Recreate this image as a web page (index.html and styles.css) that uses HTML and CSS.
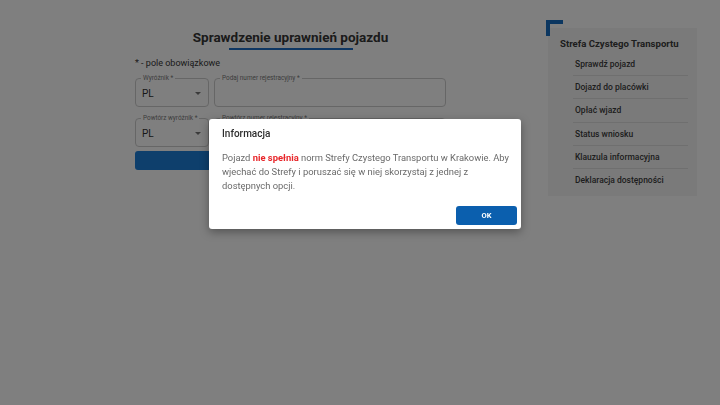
FILE: index.html
```html
<!DOCTYPE html>
<html lang="pl">
<head>
<meta charset="utf-8">
<title>Sprawdzenie uprawnień pojazdu</title>
<link rel="stylesheet" href="styles.css">
</head>
<body>
<div class="wrap">
  <main class="main">
    <h1 class="title">Sprawdzenie uprawnień pojazdu</h1>
    <div class="underline"></div>
    <p class="req">* - pole obowiązkowe</p>
    <div class="row">
      <div class="field field-sm">
        <span class="flabel">Wyróżnik *</span>
        <span class="fval">PL</span>
        <span class="arrow"></span>
      </div>
      <div class="field field-lg">
        <span class="flabel">Podaj numer rejestracyjny *</span>
      </div>
    </div>
    <div class="row row2">
      <div class="field field-sm">
        <span class="flabel">Powtórz wyróżnik *</span>
        <span class="fval">PL</span>
        <span class="arrow"></span>
      </div>
      <div class="field field-lg">
        <span class="flabel">Powtórz numer rejestracyjny *</span>
      </div>
    </div>
    <div class="btn-main"></div>
  </main>
  <aside class="side">
    <div class="corner"></div>
    <div class="side-title">Strefa Czystego Transportu</div>
    <ul class="menu">
      <li>Sprawdź pojazd</li>
      <li>Dojazd do placówki</li>
      <li>Opłać wjazd</li>
      <li>Status wniosku</li>
      <li>Klauzula informacyjna</li>
      <li>Deklaracja dostępności</li>
    </ul>
  </aside>
</div>
<div class="overlay"></div>
<div class="modal">
  <div class="modal-title">Informacja</div>
  <p class="modal-body">Pojazd <b class="red">nie spełnia</b> norm Strefy Czystego Transportu w Krakowie. Aby wjechać do Strefy i poruszać się w niej skorzystaj z jednej z dostępnych opcji.</p>
  <div class="modal-actions"><button class="ok">OK</button></div>
</div>
</body>
</html>
```
FILE: styles.css
```css
* { box-sizing: border-box; }
html, body { margin: 0; padding: 0; }
body {
  width: 720px;
  height: 405px;
  overflow: hidden;
  background: #fff;
  font-family: Roboto, "Liberation Sans", sans-serif;
  color: #363636;
}
.wrap {
  display: flex;
  padding: 20px 0 0 135px;
}
.main {
  width: 311px;
  display: flex;
  flex-direction: column;
}
.title {
  margin: 8px 0 0;
  font-size: 13.5px;
  line-height: 18px;
  font-weight: 700;
  text-align: center;
  color: #363636;
}
.underline {
  width: 124px;
  height: 2px;
  margin: 2px auto 0;
  background: #1c6cc4;
}
.req {
  margin: 7px 0 0;
  font-size: 9px;
  line-height: 12px;
  color: #363636;
}
.row {
  display: flex;
  gap: 5px;
  margin-top: 9px;
}
.row2 { margin-top: 11px; }
.field {
  position: relative;
  height: 29px;
  border: 1px solid #cdcdcd;
  border-radius: 4px;
  display: flex;
  align-items: center;
  padding-left: 6px;
}
.field-sm { width: 74px; }
.field-lg { flex: 1; }
.flabel {
  position: absolute;
  top: -5px;
  left: 5px;
  font-size: 6.4px;
  line-height: 8px;
  padding: 0 2px;
  background: #fff;
  color: #7a7a7a;
}
.fval {
  font-size: 10px;
  color: #303030;
  margin-top: 2px;
}
.arrow {
  position: absolute;
  right: 7px;
  top: 13px;
  width: 0;
  height: 0;
  border-left: 3px solid transparent;
  border-right: 3px solid transparent;
  border-top: 3px solid #777;
}
.btn-main {
  margin-top: 4px;
  height: 19px;
  border-radius: 3px;
  background: #1c7ed8;
}
.side {
  position: relative;
  width: 149px;
  height: 168px;
  margin: 8px 0 0 102px;
  background: #f4f4f4;
  padding: 10px 9px 0 12px;
}
.corner {
  position: absolute;
  top: -8px;
  left: -2px;
  width: 17px;
  height: 16px;
  border-top: 4px solid #166cc0;
  border-left: 4px solid #166cc0;
}
.side-title {
  font-size: 9.6px;
  line-height: 12px;
  font-weight: 700;
  color: #3c3c3c;
}
.menu {
  list-style: none;
  margin: 3px 0 0 13px;
  padding: 0;
}
.menu li {
  height: 23.2px;
  line-height: 23px;
  padding-left: 2px;
  font-size: 8.5px;
  font-weight: 500;
  color: #3c3c3c;
  border-bottom: 1px solid #dedede;
}
.menu li:last-child { border-bottom: none; }
.overlay {
  position: fixed;
  inset: 0;
  background: rgba(0, 0, 0, 0.5);
}
.modal {
  position: absolute;
  left: 209px;
  top: 119px;
  width: 312px;
  height: 110px;
  background: #fff;
  border-radius: 3px;
  box-shadow: 0 3px 10px rgba(0, 0, 0, 0.35);
  padding: 8px 4px 4px 13px;
  display: flex;
  flex-direction: column;
}
.modal-title {
  font-size: 10px;
  line-height: 14px;
  font-weight: 500;
  color: #2e2e2e;
}
.modal-body {
  margin: 10px 0 0;
  font-size: 9.4px;
  line-height: 14px;
  color: #6a6a6a;
  padding-right: 0;
}
.red { color: #e8262a; font-weight: 700; }
.modal-actions {
  margin-top: auto;
  display: flex;
  justify-content: flex-end;
}
.ok {
  width: 61px;
  height: 19px;
  border: none;
  border-radius: 3px;
  background: #0b5fae;
  color: #fff;
  font-family: Roboto, "Liberation Sans", sans-serif;
  font-size: 7.5px;
  font-weight: 700;
  padding: 0;
}
```
